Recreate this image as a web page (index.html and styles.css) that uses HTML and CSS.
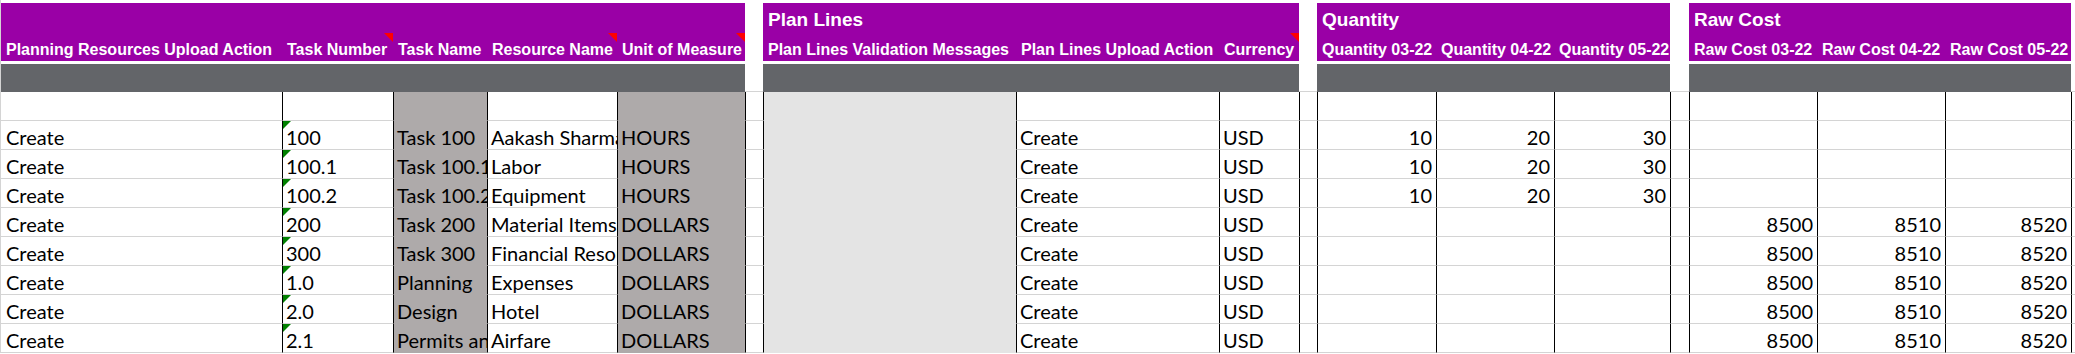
FILE: index.html
```html
<!DOCTYPE html>
<html lang="en">
<head>
<meta charset="utf-8">
<title>Planning Resources</title>
<link rel="stylesheet" href="styles.css">
</head>
<body>
<div class="sheet">
  <div class="top-space"></div>

  <div class="row title-row">
    <div class="sec s1"></div>
    <div class="sec s2">Plan Lines</div>
    <div class="sec s3">Quantity</div>
    <div class="sec s4">Raw Cost</div>
  </div>

  <div class="row label-row">
    <div class="lab">Planning Resources Upload Action</div>
    <div class="lab note">Task Number</div>
    <div class="lab">Task Name</div>
    <div class="lab note">Resource Name</div>
    <div class="lab note">Unit of Measure</div>
    <div class="hgap"></div>
    <div class="lab">Plan Lines Validation Messages</div>
    <div class="lab">Plan Lines Upload Action</div>
    <div class="lab note">Currency</div>
    <div class="hgap"></div>
    <div class="lab">Quantity 03-22</div>
    <div class="lab">Quantity 04-22</div>
    <div class="lab">Quantity 05-22</div>
    <div class="hgap"></div>
    <div class="lab">Raw Cost 03-22</div>
    <div class="lab">Raw Cost 04-22</div>
    <div class="lab">Raw Cost 05-22</div>
    <div class="hgap"></div>
  </div>

  <div class="spacer"></div>

  <div class="row band-row">
    <div class="band"></div><div class="band"></div><div class="band"></div><div class="band"></div><div class="band"></div>
    <div class="bgap"></div>
    <div class="band"></div><div class="band"></div><div class="band"></div>
    <div class="bgap"></div>
    <div class="band"></div><div class="band"></div><div class="band"></div>
    <div class="bgap"></div>
    <div class="band"></div><div class="band"></div><div class="band"></div>
    <div class="bgap"></div>
  </div>

  <div class="row">
    <div class="c first"></div><div class="c"></div><div class="c fill"></div><div class="c"></div><div class="c fill"></div>
    <div class="c"></div>
    <div class="c val"></div><div class="c"></div><div class="c"></div>
    <div class="c"></div>
    <div class="c num"></div><div class="c num"></div><div class="c num"></div>
    <div class="c"></div>
    <div class="c num"></div><div class="c num"></div><div class="c num"></div>
    <div class="c"></div>
  </div>

  <div class="row">
    <div class="c first">Create</div><div class="c tnum">100</div><div class="c fill">Task 100</div><div class="c">Aakash Sharma</div><div class="c fill">HOURS</div>
    <div class="c"></div>
    <div class="c val"></div><div class="c">Create</div><div class="c">USD</div>
    <div class="c"></div>
    <div class="c num">10</div><div class="c num">20</div><div class="c num">30</div>
    <div class="c"></div>
    <div class="c num"></div><div class="c num"></div><div class="c num"></div>
    <div class="c"></div>
  </div>

  <div class="row">
    <div class="c first">Create</div><div class="c tnum">100.1</div><div class="c fill">Task 100.1</div><div class="c">Labor</div><div class="c fill">HOURS</div>
    <div class="c"></div>
    <div class="c val"></div><div class="c">Create</div><div class="c">USD</div>
    <div class="c"></div>
    <div class="c num">10</div><div class="c num">20</div><div class="c num">30</div>
    <div class="c"></div>
    <div class="c num"></div><div class="c num"></div><div class="c num"></div>
    <div class="c"></div>
  </div>

  <div class="row">
    <div class="c first">Create</div><div class="c tnum">100.2</div><div class="c fill">Task 100.2</div><div class="c">Equipment</div><div class="c fill">HOURS</div>
    <div class="c"></div>
    <div class="c val"></div><div class="c">Create</div><div class="c">USD</div>
    <div class="c"></div>
    <div class="c num">10</div><div class="c num">20</div><div class="c num">30</div>
    <div class="c"></div>
    <div class="c num"></div><div class="c num"></div><div class="c num"></div>
    <div class="c"></div>
  </div>

  <div class="row">
    <div class="c first">Create</div><div class="c tnum">200</div><div class="c fill">Task 200</div><div class="c">Material Items</div><div class="c fill">DOLLARS</div>
    <div class="c"></div>
    <div class="c val"></div><div class="c">Create</div><div class="c">USD</div>
    <div class="c"></div>
    <div class="c num"></div><div class="c num"></div><div class="c num"></div>
    <div class="c"></div>
    <div class="c num">8500</div><div class="c num">8510</div><div class="c num">8520</div>
    <div class="c"></div>
  </div>

  <div class="row">
    <div class="c first">Create</div><div class="c tnum">300</div><div class="c fill">Task 300</div><div class="c">Financial Resources</div><div class="c fill">DOLLARS</div>
    <div class="c"></div>
    <div class="c val"></div><div class="c">Create</div><div class="c">USD</div>
    <div class="c"></div>
    <div class="c num"></div><div class="c num"></div><div class="c num"></div>
    <div class="c"></div>
    <div class="c num">8500</div><div class="c num">8510</div><div class="c num">8520</div>
    <div class="c"></div>
  </div>

  <div class="row">
    <div class="c first">Create</div><div class="c tnum">1.0</div><div class="c fill">Planning</div><div class="c">Expenses</div><div class="c fill">DOLLARS</div>
    <div class="c"></div>
    <div class="c val"></div><div class="c">Create</div><div class="c">USD</div>
    <div class="c"></div>
    <div class="c num"></div><div class="c num"></div><div class="c num"></div>
    <div class="c"></div>
    <div class="c num">8500</div><div class="c num">8510</div><div class="c num">8520</div>
    <div class="c"></div>
  </div>

  <div class="row">
    <div class="c first">Create</div><div class="c tnum">2.0</div><div class="c fill">Design</div><div class="c">Hotel</div><div class="c fill">DOLLARS</div>
    <div class="c"></div>
    <div class="c val"></div><div class="c">Create</div><div class="c">USD</div>
    <div class="c"></div>
    <div class="c num"></div><div class="c num"></div><div class="c num"></div>
    <div class="c"></div>
    <div class="c num">8500</div><div class="c num">8510</div><div class="c num">8520</div>
    <div class="c"></div>
  </div>

  <div class="row">
    <div class="c first">Create</div><div class="c tnum">2.1</div><div class="c fill">Permits and Approvals</div><div class="c">Airfare</div><div class="c fill">DOLLARS</div>
    <div class="c"></div>
    <div class="c val"></div><div class="c">Create</div><div class="c">USD</div>
    <div class="c"></div>
    <div class="c num"></div><div class="c num"></div><div class="c num"></div>
    <div class="c"></div>
    <div class="c num">8500</div><div class="c num">8510</div><div class="c num">8520</div>
    <div class="c"></div>
  </div>
</div>
</body>
</html>
```

FILE: styles.css
```css
* { box-sizing: border-box; }

html, body {
  margin: 0;
  padding: 0;
  background: #ffffff;
}

body {
  width: 2075px;
  height: 354px;
  overflow: hidden;
}

.sheet {
  width: 2075px;
  border-left: 1px solid #d4d4d4;
}

.top-space { height: 3px; }
.spacer { height: 3px; }

.row {
  display: grid;
  grid-template-columns: 281px 111px 94px 130px 128px 18px 253px 203px 80px 18px 119px 118px 116px 19px 128px 128px 126px 4px;
}

.title-row { height: 29px; }

.sec {
  background: #9a00a6;
  color: #ffffff;
  font-family: "Liberation Sans", Arial, sans-serif;
  font-weight: bold;
  font-size: 19px;
  line-height: 23px;
  padding: 5px 0 0 5px;
  white-space: nowrap;
}
.s1 { grid-column: 1 / 6; }
.s2 { grid-column: 7 / 10; }
.s3 { grid-column: 11 / 14; }
.s4 { grid-column: 15 / 18; }

.label-row { height: 29px; }

.lab {
  position: relative;
  background: #9a00a6;
  color: #ffffff;
  font-family: "Liberation Sans", Arial, sans-serif;
  font-weight: bold;
  font-size: 16px;
  line-height: 23px;
  padding: 6px 0 0 5px;
  white-space: nowrap;
  overflow: hidden;
}
.lab.note::after {
  content: "";
  position: absolute;
  top: 1px;
  right: 0;
  width: 0;
  height: 0;
  border-top: 9px solid #ff0000;
  border-left: 9px solid transparent;
}

.hgap { background: #ffffff; }

.band-row { height: 28px; }
.band { background: #636569; }
.bgap {
  background: #ffffff;
  border-bottom: 1px solid #d4d4d4;
}

.c {
  position: relative;
  height: 29px;
  border-left: 1px solid #000000;
  border-bottom: 1px solid #d4d4d4;
  font-family: Lato, "Noto Sans", sans-serif;
  font-size: 20px;
  line-height: 24px;
  padding: 4px 3px 0 3px;
  color: #000000;
  white-space: nowrap;
  overflow: hidden;
}
.c.first {
  border-left: none;
  padding-left: 5px;
}
.c.num {
  text-align: right;
  padding-right: 4px;
}
.c.fill {
  background: #aeaaaa;
  border-bottom-color: #aeaaaa;
}
.c.val {
  background: #e4e4e4;
  border-bottom-color: #e4e4e4;
}
.c.tnum::before {
  content: "";
  position: absolute;
  top: 0;
  left: 0;
  width: 0;
  height: 0;
  border-top: 8px solid #008000;
  border-right: 8px solid transparent;
}
```
